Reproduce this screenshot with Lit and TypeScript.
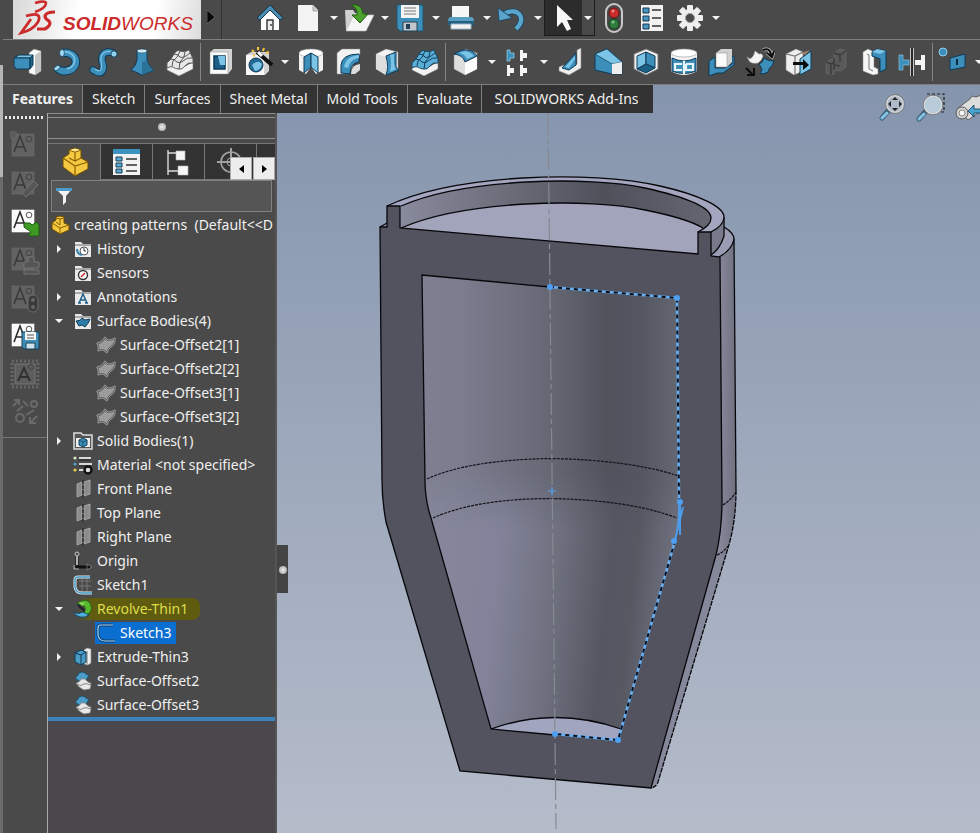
import { LitElement, html, svg, css, TemplateResult } from "lit";
import { customElement, property } from "lit/decorators.js";

/* Toolbar glyphs are drawn on a 30 x 30 grid, tree glyphs on 20 x 20. */
const B = "#3d8fbb";
const L = "#7cc4e6";
const D = "#0f3a57";
const W = "#f2f2f2";

const wavy = (fill: string, line: string) => svg`
  <path d="M2 15L14 22L28 15V22L14 29L2 23Z" fill=${W} stroke="#777" stroke-width=".6"/>
  <path d="M2 16Q6 13 9 7Q12 2 15 4Q19 6 24 3L28 12V16Q23 15 20 19Q17 23 14 22Q10 22 8 20Q5 19 2 21Z" fill=${fill} stroke=${line} stroke-width=".9"/>
  <path d="M5 12Q10 12 12 15Q15 17 18 14Q22 10 27 11M9 7Q13 7 15 10Q18 12 25 6M15 4Q13 11 8 14L7 19M20 5Q20 11 15 15L14 22" fill="none" stroke=${line} stroke-width="1"/>`;

const big: Record<string, TemplateResult> = {
  home: svg`<path d="M6 13V27H24V13L15 5Z" fill="#fff"/><path d="M2 15L15 2L28 15L25 17L15 7L5 17Z" fill="#4a8db4" stroke="#16374d"/><path d="M12 27V17H18V27" fill="#eee" stroke="#333" stroke-width="1.4"/><circle cx="16" cy="22" r=".9" fill="#333"/>`,
  page: svg`<path d="M5 2H20L25 7V28H5Z" fill="#f4f4f4"/><path d="M20 2V8H25" fill="#ccc" stroke="#999" stroke-width=".8"/>`,
  open: svg`<path d="M1 7H9L11 10H20V27H2Z" fill="#cfcfcf"/><path d="M2 28L10 12H30L22 28Z" fill="#f5f5f5" stroke="#bbb" stroke-width=".6"/><path d="M7 2Q18 0 19 11H24L16 20L8 12H13Q14 5 7 2Z" fill="#4ba22c" stroke="#1f5c11"/>`,
  save: svg`<path d="M2 2H28V28H5L2 25Z" fill=${B} stroke="#20546f"/><path d="M6 2H24V15H6Z" fill="#f4f4f4"/><path d="M9 5H21M9 8H21M9 11H21" stroke="#777"/><path d="M8 19H22V28H8Z" fill="#bfc7cc" stroke="#28414f"/><path d="M11 21H15V26H11Z" fill="#1f4258"/>`,
  print: svg`<path d="M6 3H23V16H6Z" fill="#f7f7f7"/><path d="M4 14H26Q28 15 28 18V20H2V18Q2 15 4 14Z" fill="#5aa0c4"/><path d="M2 18H28V22H2Z" fill="#255f80"/><path d="M5 21H25V26H5Z" fill="#f3f3f3" stroke="#97b9ca"/>`,
  undo: svg`<path d="M7 11C20 3 31 15 19 26" fill="none" stroke="#15445f" stroke-width="6"/><path d="M7 11C20 3 31 15 19 26" fill="none" stroke="#5ba4cb" stroke-width="4.4"/><path d="M1 5L2 18L15 15Z" fill="#5ba4cb" stroke="#15445f" stroke-width=".8"/>`,
  cursor: svg`<path d="M8 2V24L13 19L18 28L22 26L18 17H24Z" fill="#f8f8f8"/>`,
  light: svg`<rect x="7" y="1" width="16" height="28" rx="8" fill="#4a4a4a" stroke="#c9c9c9" stroke-width="2"/><circle cx="15" cy="10" r="5" fill="#c92c2a" stroke="#6a1413"/><circle cx="15" cy="21" r="5" fill="#2f7c3d" stroke="#123f1a"/><circle cx="14" cy="8" r="1.5" fill="#ee8a86"/><circle cx="14" cy="19" r="1.5" fill="#86c28e"/>`,
  list: svg`<path d="M4 2H26V28H4Z" fill="#f1f1f1"/><path d="M6 5h6v5H6zM6 13h6v5H6zM6 21h6v5H6z" fill="#4796c0" stroke="#14374f"/><path d="M15 7H24M15 15H24M15 23H24" stroke="#333" stroke-width="1.4"/>`,
  gear: svg`<g fill="#efefef"><g><rect x="12" y="2" width="6" height="26" rx="1"/><rect x="2" y="12" width="26" height="6" rx="1"/></g><g transform="rotate(45 15 15)"><rect x="12" y="2" width="6" height="26" rx="1"/><rect x="2" y="12" width="26" height="6" rx="1"/></g><circle cx="15" cy="15" r="9"/></g><circle cx="15" cy="15" r="4.500" fill="#4a4a4a" stroke="#999"/>`,
  extrude: svg`<path d="M16 6L21 2L28 4V24L22 28L16 26Z" fill="#fafafa" stroke="#888" stroke-width=".6"/><path d="M22 8V28L28 24V4Z" fill="#c6c6c6"/><path d="M1 11L6 8H20L17 11Z" fill=${L} stroke=${D}/><path d="M1 11H17V22H3L1 19Z" fill=${B} stroke=${D}/><path d="M17 11L20 8V18L17 22Z" fill="#1f6389" stroke=${D}/>`,
  revolve: svg`<path d="M12 6C27 4 30 22 15 24Q10 25 6 21" fill="none" stroke=${D} stroke-width="8.5"/><path d="M12 6C27 4 30 22 15 24Q10 25 6 21" fill="none" stroke=${B} stroke-width="6.5"/><path d="M13 5C25 4 28 19 16 22" fill="none" stroke=${L} stroke-width="1.8"/><ellipse cx="11" cy="6" rx="2.4" ry="3.6" fill="#a4dcf3" stroke=${D} stroke-width=".7"/><ellipse cx="6" cy="21" rx="3.4" ry="2" transform="rotate(-40 6 21)" fill="#a4dcf3" stroke=${D} stroke-width=".7"/>`,
  sweep: svg`<path d="M4 23C14 30 16 22 13 14C12 5 18 4 24 6" fill="none" stroke=${D} stroke-width="7.5" stroke-linecap="round"/><path d="M4 23C14 30 16 22 13 14C12 5 18 4 24 6" fill="none" stroke=${B} stroke-width="5.5" stroke-linecap="round"/><path d="M6 22C13 27 13 21 12 14C11 6 17 3 23 5" fill="none" stroke=${L} stroke-width="1.2"/><circle cx="25" cy="7" r="3.2" fill="#8fd0ec" stroke=${D}/>`,
  loft: svg`<path d="M10 4V13Q9 19 4 23L15 28L27 23Q21 19 20 13V4Z" fill=${B} stroke=${D}/><path d="M15 15V28L27 23Q21 19 20 13Z" fill="#2b7299"/><ellipse cx="15" cy="4" rx="5" ry="2" fill="#d7eef8" stroke=${D} stroke-width=".6"/>`,
  boundary: wavy("#e6e6e6", "#555"),
  cut: svg`<path d="M4 5L8 2H26V22L22 27H4Z" fill="#d3d3d3"/><path d="M4 5H22V27H4Z" fill="#fafafa" stroke="#888" stroke-width=".5"/><path d="M8 9H19V22H8Z" fill="#1d5f86" stroke=${D} stroke-width="1.5"/><path d="M12 9H19V18L14 18Z" fill=${L}/>`,
  wizard: svg`<path d="M2 8L7 5H25V24L21 28H2Z" fill="#d3d3d3"/><path d="M2 8H20V28H2Z" fill="#f8f8f8"/><circle cx="12" cy="18" r="7" fill="#226a94" stroke=${D}/><path d="M8 18Q14 12 18 17Q17 23 11 24Z" fill=${L}/><path d="M13 5L28 18" stroke="#111" stroke-width="4"/><path d="M14 5L18 9" stroke="#fff" stroke-width="3"/><path d="M8 3l2 2M14 0v3M20 1l-1 3M9 9l2-1M22 6l3-1" stroke="#f5c242" stroke-width="2"/>`,
  revcut: svg`<path d="M3 6Q15 0 27 6V23L20 27L15 20L10 27L3 23Z" fill=${W}/><ellipse cx="15" cy="6" rx="12" ry="4" fill="#fff" stroke="#999" stroke-width=".6"/><path d="M15 6L8 10V26L15 20Z" fill=${B} stroke=${D}/><path d="M15 6L22 10V26L15 20Z" fill=${L} stroke=${D}/>`,
  sweepcut: svg`<path d="M3 6L8 2H26V7L14 27H3Z" fill=${W} stroke="#888" stroke-width=".5"/><path d="M7 26V18Q8 7 25 7V15Q16 16 16 27Z" fill=${B} stroke=${D}/><path d="M10 20Q12 9 25 8V11Q16 12 14 21Z" fill=${L}/><path d="M17 27Q17 18 26 17V23L21 27Z" fill="#ddd"/>`,
  loftcut: svg`<path d="M4 7L14 2L26 5V23L14 28L4 22Z" fill=${W} stroke="#888" stroke-width=".5"/><path d="M4 7L14 10V28L4 22Z" fill="#ddd"/><path d="M14 9L24 5V20Q26 23 27 23L14 28Q17 20 14 9Z" fill=${B} stroke=${D}/><path d="M18 8L22 7Q21 18 24 22L18 25Q20 16 18 8Z" fill=${L}/>`,
  boundcut: wavy("#5aaed6", "#0e405f"),
  fillet: svg`<path d="M3 8L15 2L26 6V22L14 28L3 22Z" fill="#dedede" stroke="#888" stroke-width=".5"/><path d="M14 14L26 9V22L14 28Z" fill="#fbfbfb"/><path d="M3 7L11 3Q22 2 26 9L14 15Q12 8 3 7Z" fill=${B} stroke=${D}/><path d="M8 6L14 4Q20 5 23 9L16 12Q14 7 8 6Z" fill=${L}/>`,
  pattern: svg`<path d="M4 3H7V6H11V11H7V14H4Z" fill=${B} stroke="#9bd5ef" stroke-width=".7"/><path d="M17 3H20V6H24V11H20V14H17Z" fill="#f5f5f5"/><path d="M4 18H7V21H11V26H7V29H4Z" fill="#f5f5f5"/><path d="M17 18H20V21H24V26H20V29H17Z" fill="#f5f5f5"/>`,
  rib: svg`<path d="M22 3L26 1V21L14 28L4 24V20L9 18L15 21L22 17Z" fill="#eee" stroke="#888" stroke-width=".6"/><path d="M7 21L21 6V18L14 23Z" fill=${B} stroke=${D}/><path d="M10 20L20 9V12L14 21Z" fill=${L}/>`,
  draft: svg`<path d="M2 7L14 2L29 15V27L19 27L2 23Z" fill=${B} stroke=${D}/><path d="M2 7L14 2L29 15L19 17Z" fill=${L} stroke=${D} stroke-width=".7"/><path d="M19 17L29 15V27H19Z" fill="#eeeeee"/>`,
  shell: svg`<path d="M3 7L15 2L27 7V22L15 28L3 22Z" fill=${W} stroke="#777"/><path d="M6 9L15 5V17L6 22Z" fill=${L} stroke=${D}/><path d="M15 5L24 9V21L15 17Z" fill=${B} stroke=${D}/><path d="M6 22L15 17L24 21L15 26Z" fill="#1c6086" stroke=${D}/>`,
  wrap: svg`<path d="M2 6V24Q15 32 28 24V6Z" fill=${W}/><ellipse cx="15" cy="6" rx="13" ry="4" fill="#fff" stroke="#999" stroke-width=".6"/><path d="M3 11Q15 17 27 11V24Q15 29 3 24Z" fill=${B} stroke=${D}/><path d="M13 17H6V23H13M17 17H24V23H17V17M15 14V27" fill="none" stroke="#e9f5fa" stroke-width="2.2"/>`,
  intersect: svg`<path d="M2 14L8 10V21H18L25 17V10L27 9V18L16 26H10L2 29Z" fill=${B} stroke=${D}/><path d="M9 6L14 2H25V15L20 20H9Z" fill="#d0d0d0"/><path d="M9 6H20V20H9Z" fill="#fafafa" stroke="#888" stroke-width=".5"/>`,
  flex: svg`<path d="M2 10L5 12Q9 10 10 4L14 7Q17 6 18 9Q17 13 13 16Q8 17 5 15Z" fill="#f5f5f5" stroke="#aaa" stroke-width=".5"/><path d="M14 17Q18 16 19 11Q22 14 29 14L27 19Q24 20 23 25Q20 27 15 27L17 22Z" fill=${B} stroke=${D}/><path d="M18 3Q25 0 26 8M22 6L27 10L29 4" fill="none" stroke="#c4c4c4" stroke-width="3.4"/><path d="M18 3Q25 0 26 8M22 6L27 10L29 4M1 21L8 28M9 21V28H2" fill="none" stroke="#0c0c0c" stroke-width="2"/>`,
  move: svg`<path d="M3 7L13 2L20 5V24L11 28L3 23Z" fill="#eee" stroke="#888" stroke-width=".6"/><path d="M3 7L12 9L20 5M12 9V28" fill="none" stroke="#777" stroke-width="1.2"/><path d="M17 12L28 4V22L17 28Z" fill=${L} stroke=${D}/><path d="M18 6L27 3L22 8Z" fill="#a3806e"/><path d="M10 15H20V12L26 18L20 23V18H10Z" fill="#0d0d0d"/>`,
  muted: svg`<path d="M5 15L13 11V6L19 2L25 4V20L19 24L13 23V27L10 28L5 26Z" fill="#595959" stroke="#6b6b6b" stroke-width=".8"/><path d="M13 6L19 8L25 4M19 8V15M13 11V23M5 15L10 17L13 16M10 17V28M13 18L19 19" fill="none" stroke="#3b3b3b" stroke-width="1.4"/>`,
  plates: svg`<path d="M4 5L9 2L15 5V20L19 22V27L14 28L4 24Z" fill="#f6f6f6" stroke="#888" stroke-width=".5"/><path d="M8 7L10 8V22L14 24" fill="none" stroke="#777"/><path d="M13 5L18 2L27 4V22L21 25V12L13 9Z" fill=${B} stroke=${D}/><path d="M13 5L18 2L27 4L21 7Z" fill=${L}/>`,
  mirror: svg`<path d="M2 8H6V13H12V18H6V23H2Z" fill=${B} stroke="#8fcfec" stroke-width=".6"/><path d="M28 8H24V13H18V18H24V23H28Z" fill="#f4f4f4"/><path d="M15 1V29" stroke="#e8e8e8" stroke-width="3.6"/><path d="M15 1V29" stroke="#151515" stroke-width="1.8"/>`,
  refgeo: svg`<circle cx="5" cy="5" r="4" fill=${B} stroke="#8fcfec"/><path d="M12 11L27 7V20L12 23Z" fill=${B} stroke=${D}/><path d="M19 12V18" stroke="#0a2a40" stroke-width="2"/>`,
  fit: svg`<path d="M11 17L4 25" stroke="#3a5f78" stroke-width="5" stroke-linecap="round"/><path d="M9 20L4 25" stroke="#86c5e4" stroke-width="3" stroke-linecap="round"/><circle cx="17" cy="11" r="8.500" fill="#aebac9" stroke="#dcdcdc" stroke-width="1.6"/><circle cx="17" cy="11" r="9.4" fill="none" stroke="#666" stroke-width=".7"/><path d="M17 4l3 3h-6zM17 18l3-3h-6zM10 11l3-3v6zM24 11l-3-3v6z" fill="#222"/>`,
  zoom: svg`<path d="M11 1H28V19H22" fill="none" stroke="#222" stroke-width="1.2" stroke-dasharray="3 2"/><path d="M10 18L3 26" stroke="#3a5f78" stroke-width="5" stroke-linecap="round"/><path d="M8 21L3 26" stroke="#86c5e4" stroke-width="3" stroke-linecap="round"/><circle cx="17" cy="12" r="9" fill="#b7cbd8" stroke="#dcdcdc" stroke-width="1.6"/><circle cx="17" cy="12" r="9.8" fill="none" stroke="#666" stroke-width=".7"/>`,
  prev: svg`<path d="M4 15L16 6L18 3L22 4L30 1V16L14 27Z" fill="#dcdcdc" stroke="#555" stroke-width=".9"/><circle cx="8" cy="20" r="6" fill="#d0d0d0" stroke="#555"/><circle cx="8" cy="20" r="3" fill="#f5f5f5" stroke="#888"/><path d="M14 18L20 12V16H30V20H20V24Z" fill="#4ba3cf" stroke=${D} stroke-width=".8"/>`,
  part: svg`<path d="M2 11L8 7V3L14 1L20 3V11L27 15V22L14 29L2 20Z" fill="#f5c842" stroke="#6e4d00"/><path d="M8 3L14 5L20 3M14 5V14L8 11M2 11L14 19L27 15M14 19V29M14 14L20 11" fill="none" stroke="#8a6200" stroke-width="1.2"/><path d="M9 3L14 1.5L19 3L14 4.500Z" fill="#ffe99a"/>`,
  props: svg`<path d="M1 3H28V28H1Z" fill="#f3f3f3"/><path d="M1 2H28V7H1Z" fill="#3b93bf"/><path d="M4 10h6v4H4zM4 16h6v4H4zM4 22h6v4H4z" fill="#5aa9d0" stroke="#173a52"/><path d="M14 12H25M14 18H25M14 24H25" stroke="#333" stroke-width="1.4"/>`,
  config: svg`<path d="M4 3V28M4 6H12M4 24H14" fill="none" stroke="#d9d9d9" stroke-width="1.4"/><path d="M12 4H21V13H12ZM14 19H24V28H14Z" fill="#f6f6f6" stroke="#bbb" stroke-width=".6"/>`,
  target: svg`<circle cx="15" cy="15" r="10" fill="none" stroke="#a2a2a2" stroke-width="1.6"/><circle cx="15" cy="15" r="4" fill="none" stroke="#a2a2a2"/><path d="M15 1V29M1 15H29" stroke="#a2a2a2" stroke-width="2"/>`,
};

/* Annotation-style buttons: a lettered plate with a small badge. */
const plate = (on: boolean, badge: TemplateResult) => svg`
  <rect x="2" y="3" width="22" height="22" fill=${on ? "#fafafa" : "#626262"} stroke=${on ? "#fff" : "#6e6e6e"} stroke-width=".6"/>
  <path d="M4 21L10 5L16 21M6 16H14" fill="none" stroke=${on ? "#2c2c2c" : "#3a3a3a"} stroke-width="1.6"/>
  <circle cx="19" cy="8" r="2.8" fill="none" stroke=${on ? "#555" : "#424242"}/>${badge}`;

const side: Record<string, TemplateResult> = {
  "New annotation style": plate(false, svg`<circle cx="3" cy="4" r="4" fill="#5c5c5c" stroke="#707070" stroke-dasharray="2 1"/>`),
  "Edit annotation style": plate(false, svg`<path d="M12 24L24 12L28 16L16 28Z" fill="#565656" stroke="#717171"/>`),
  "Apply annotation style": plate(true, svg`<path d="M14 16H20L22 18L27 15L29 18V29H18L21 25L14 20Z" fill="#3f9a23" stroke="#1e5a10"/>`),
  "Add annotation style": plate(false, svg`<path d="M18 12H24V17H29V23H14V17H18ZM14 25H29V29H14Z" fill="#555" stroke="#747474"/>`),
  "Lock annotation style": plate(false, svg`<rect x="18" y="12" width="10" height="17" rx="5" fill="#3a3a3a" stroke="#6d6d6d"/><circle cx="23" cy="17" r="2" fill="#666"/><circle cx="23" cy="24" r="2" fill="#666"/>`),
  "Save annotation style": plate(true, svg`<path d="M12 11H29V28H14L12 26Z" fill="#3f8cb5" stroke="#164057"/><path d="M15 11H26V19H15Z" fill="#f5f5f5"/><path d="M17 14H24M17 17H24" stroke="#555"/><path d="M16 22H25V28H16Z" fill="#cfe2ec" stroke="#164057"/>`),
  "Stamp annotation": svg`<path d="M2 2H28V28H2Z" fill="none" stroke="#666" stroke-width="3" stroke-dasharray="2 2"/><path d="M5 5H25V25H5Z" fill="#5e5e5e" stroke="#747474"/><path d="M8 22L14 9L20 22M10 18H18" fill="none" stroke="#303030" stroke-width="1.8"/><circle cx="21" cy="8" r="2.5" fill="none" stroke="#404040"/>`,
  "Link annotations": svg`<g fill="none" stroke="#6a6a6a" stroke-width="2"><circle cx="10" cy="21" r="4"/><circle cx="24" cy="7" r="3"/><path d="M3 9L9 3M9 8V3H4M27 19L20 26M20 20V26H26M13 4L18 9M24 13L16 18M7 14L13 9"/></g>`,
};

const folder = (inner: TemplateResult) => svg`<path d="M2 3H8L10 5H18V18H2Z" fill="#e9e9e9"/><path d="M2 6H18" stroke="#4a4a4a" stroke-width=".8"/>${inner}`;

const small: Record<string, TemplateResult> = {
  part: svg`<path d="M1 8L5 5V2L9 1L13 2V8L18 10V15L9 19L1 14Z" fill="#f5c842" stroke="#6e4d00"/><path d="M5 3L9 4L13 3M9 4V10L5 7M1 8L9 13L18 10M9 13V19" fill="none" stroke="#8a6200"/>`,
  history: folder(svg`<circle cx="11" cy="12" r="4" fill="#fff" stroke="#555"/><path d="M11 9V12H13" fill="none" stroke="#333"/><path d="M4 10Q4 15 9 16" fill="none" stroke="#2e82ad" stroke-width="2"/>`),
  sensors: folder(svg`<circle cx="10" cy="12" r="4.500" fill="#fff" stroke="#333" stroke-width="1.4"/><path d="M8 14L12 10" stroke="#c22" stroke-width="1.4"/>`),
  annotations: folder(svg`<path d="M6 16L10 7L14 16M7 13H13M5 16H8M12 16H15" fill="none" stroke="#1f5f8a" stroke-width="1.5"/>`),
  surfaces: folder(svg`<path d="M3 10Q8 10 9 7L12 9L17 8Q16 12 12 16L9 14L6 15Z" fill="#2d7ba6" stroke="#123f5a"/>`),
  solids: svg`<path d="M1 2H8L10 4H19V18H1Z" fill="#555" stroke="#ddd" stroke-width="1.5"/><path d="M3 7H17V16H3Z" fill="#eee"/><path d="M6 9L10 7L14 9V14L10 16L6 14Z" fill="#3a8fbb" stroke="#123f5a"/><path d="M6 9L10 11L14 9M10 11V16" fill="none" stroke="#123f5a" stroke-width=".8"/>`,
  material: svg`<path d="M6 3H18M6 9H19M6 15H12" stroke="#d8d8d8" stroke-width="2"/><path d="M6 5H18M6 11H18" stroke="#222"/><circle cx="2" cy="3" r="1.6" fill="#cfe8c4"/><circle cx="2" cy="9" r="1.6" fill="#4ba3cf"/><circle cx="2" cy="15" r="1.6" fill="#e8d245"/><circle cx="15" cy="15" r="3.500" fill="#ddd" stroke="#111" stroke-width="2.4"/>`,
  plane: svg`<path d="M4 5L9 3V16L4 18ZM11 3L17 1V15L11 17Z" fill="#8b8b8b" stroke="#b0b0b0" stroke-width=".8"/><path d="M10 1V19" stroke="#2c2c2c" stroke-width="1.4" stroke-dasharray="4 1"/>`,
  origin: svg`<path d="M4 5V16H15" fill="none" stroke="#111" stroke-width="3"/><path d="M4 14V5" stroke="#b0b0b0" stroke-width="2"/><circle cx="4" cy="3" r="2" fill="#4a4a4a" stroke="#c4c4c4"/><path d="M14 13L19 16L14 19Z" fill="#111" stroke="#aaa" stroke-width=".6"/><path d="M1 14V18H6" fill="none" stroke="#ccc" stroke-width=".8"/>`,
  sketch: svg`<path d="M6 6H18M6 11H18M9 2V17M14 2V17" stroke="#777"/><path d="M17 2H5Q2 2 2 5V12Q3 18 9 18H19" fill="none" stroke="#e6e6e6" stroke-width="3"/><path d="M17 2H5Q2 2 2 5V12Q3 18 9 18H19" fill="none" stroke="#3f9bc9" stroke-width="1.4"/>`,
  sketchOn: svg`<path d="M17 2H5Q2 2 2 5V12Q3 18 9 18H19" fill="none" stroke="#15406a" stroke-width="3"/><path d="M17 2H5Q2 2 2 5V12Q3 18 9 18H19" fill="none" stroke="#9fd4f7" stroke-width="1.2"/>`,
  revolve: svg`<path d="M4 5Q12 -2 17 4Q21 13 13 16L10 12Q14 10 11 7Z" fill="#58b82d" stroke="#1f5c11" stroke-width=".8"/><path d="M5 6L12 12" stroke="#223" stroke-width="2.4"/><path d="M1 13Q6 16 9 13Q13 14 16 16Q12 19 7 18Q2 17 1 13Z" fill="#4fb0dc" stroke="#0f3a57" stroke-width=".8"/><path d="M6 3L12 4L9 7Z" fill="#8fd65c"/>`,
  extrude: svg`<path d="M11 3L14 1L18 2V16L15 18L11 17Z" fill="#eee" stroke="#888" stroke-width=".6"/><path d="M14 4V17" stroke="#777"/><path d="M2 6L8 3L13 5V15L8 18L2 15Z" fill="#4a9cc6" stroke="#0f3a57"/><path d="M2 6L8 8L13 5M8 8V18" fill="none" stroke="#0f3a57"/>`,
  offset: svg`<path d="M2 7Q5 5 6 2Q9 0 12 2Q13 4 16 4Q14 9 11 11Q6 11 2 7Z" fill="#4a9cc6" stroke="#123f5a" stroke-width=".7"/><path d="M3 12Q7 11 8 8Q12 7 14 10Q16 12 18 12Q18 16 17 18L11 19Q6 17 3 12Z" fill="#e8e8e8" stroke="#777" stroke-width=".7"/><path d="M4 13Q8 16 11 13Q14 12 18 14" fill="none" stroke="#888"/>`,
  body: svg`<path d="M1 8Q6 8 9 2L12 5Q16 5 19 3Q20 9 15 12Q12 14 11 18L7 15Q4 15 2 16Q3 12 1 8Z" fill="#9c9c9c" stroke="#555" stroke-width="2"/><path d="M1 8Q6 8 9 2L12 5Q16 5 19 3Q20 9 15 12Q12 14 11 18L7 15Q4 15 2 16Q3 12 1 8Z" fill="none" stroke="#b4b4b4" stroke-width=".7"/>`,
};

const glyph = (name: string) => html`<svg width="30" height="30" viewBox="0 0 30 30" aria-hidden="true">${big[name]}</svg>`;

type Tool = [string, string, boolean?];
type Row = { label: string; icon: string; caret?: "open" | "shut"; kind?: string };

const quick: Tool[] = [
  ["home", "Welcome"], ["page", "New", true], ["open", "Open", true], ["save", "Save", true],
  ["print", "Print", true], ["undo", "Undo", true], ["cursor", "Select", true],
  ["light", "Rebuild"], ["list", "File properties"], ["gear", "Options", true],
];

const groups: Tool[][] = [
  [["extrude", "Extruded boss"], ["revolve", "Revolved boss"], ["sweep", "Swept boss"], ["loft", "Lofted boss"], ["boundary", "Boundary boss"]],
  [["cut", "Extruded cut"], ["wizard", "Hole wizard", true], ["revcut", "Revolved cut"], ["sweepcut", "Swept cut"], ["loftcut", "Lofted cut"], ["boundcut", "Boundary cut"]],
  [["fillet", "Fillet", true], ["pattern", "Linear pattern", true], ["rib", "Rib"], ["draft", "Draft"], ["shell", "Shell"], ["wrap", "Wrap"], ["intersect", "Intersect"], ["flex", "Flex"], ["move", "Move face"], ["muted", "Combine"], ["plates", "Split"], ["mirror", "Mirror"]],
  [["refgeo", "Reference geometry", true]],
];

const tabs = ["Features", "Sketch", "Surfaces", "Sheet Metal", "Mold Tools", "Evaluate", "SOLIDWORKS Add-Ins"];

const rows: Row[] = [
  { label: "creating patterns  (Default<<D", icon: "part", kind: "root" },
  { label: "History", icon: "history", caret: "shut" },
  { label: "Sensors", icon: "sensors" },
  { label: "Annotations", icon: "annotations", caret: "shut" },
  { label: "Surface Bodies(4)", icon: "surfaces", caret: "open" },
  { label: "Surface-Offset2[1]", icon: "body", kind: "child" },
  { label: "Surface-Offset2[2]", icon: "body", kind: "child" },
  { label: "Surface-Offset3[1]", icon: "body", kind: "child" },
  { label: "Surface-Offset3[2]", icon: "body", kind: "child" },
  { label: "Solid Bodies(1)", icon: "solids", caret: "shut" },
  { label: "Material <not specified>", icon: "material" },
  { label: "Front Plane", icon: "plane" },
  { label: "Top Plane", icon: "plane" },
  { label: "Right Plane", icon: "plane" },
  { label: "Origin", icon: "origin" },
  { label: "Sketch1", icon: "sketch" },
  { label: "Revolve-Thin1", icon: "revolve", caret: "open", kind: "marked" },
  { label: "Sketch3", icon: "sketchOn", kind: "child selected" },
  { label: "Extrude-Thin3", icon: "extrude", caret: "shut" },
  { label: "Surface-Offset2", icon: "offset" },
  { label: "Surface-Offset3", icon: "offset" },
];

const shared = css`
  * { box-sizing: border-box; }
  button { font: inherit; color: inherit; background: none; border: 0; margin: 0; padding: 0; display: flex; align-items: center; justify-content: center; flex: none; }
  svg { display: block; flex: none; }
`;

@customElement("tool-button")
export class ToolButton extends LitElement {
  @property() icon = "";
  @property() label = "";
  @property({ type: Boolean }) menu = false;
  static styles = [shared, css`
    :host { display: flex; flex: none; height: 100%; }
    .tool { width: 38px; height: 100%; }
    .menu { width: var(--menu, 13px); height: 100%; }
    :host([icon="cursor"]) { border: 1px solid #1c1c1c; border-top: 0; }
    :host([icon="cursor"]) .tool { background: #2c2c2c; width: 37px; }
    :host([icon="cursor"]) .menu { width: 12px; }
  `];
  render() {
    return html`<button class="tool" aria-label=${this.label}>${glyph(this.icon)}</button>
      ${this.menu ? html`<button class="menu" aria-label=${this.label + " options"}>
        <svg width="8" height="4" viewBox="0 0 8 4"><path d="M0 0H8L4 4Z" fill="#f2f2f2"/></svg></button>` : ""}`;
  }
}

@customElement("feature-tree")
export class FeatureTree extends LitElement {
  static styles = [shared, css`
    :host { display: block; padding-top: 1px; }
    ul { list-style: none; margin: 0; padding: 0; border-bottom: 4px solid #3d82bd; }
    li { display: flex; align-items: center; height: 24px; white-space: pre; }
    .caret { width: 22px; height: 24px; }
    .item { display: flex; align-items: center; gap: 4px; height: 22px; padding: 0 4px 0 1px; margin-left: 2px; }
    .space { flex: none; width: 22px; }
    .root .item { padding-right: 0; gap: 3px; }
    .root .space { display: none; }
    .child .item { margin-left: 25px; }
    .selected .item { background: #0b6ed1; color: #fff; }
    .marked .item { background: linear-gradient(90deg, #4a4a4a 5px, #5f5c10 20px); border-radius: 0 8px 8px 0; padding-right: 12px; color: #dfdd48; }
  `];
  render() {
    return html`<ul role="tree" aria-label="Feature tree">${rows.map((r) => html`
      <li role="treeitem" class=${r.kind ?? ""}>
        ${r.caret ? html`<button class="caret" aria-label=${"Toggle " + r.label}>${r.caret === "open"
          ? html`<svg width="8" height="4" viewBox="0 0 8 4"><path d="M0 0H8L4 4Z" fill="#f2f2f2"/></svg>`
          : html`<svg width="4" height="8" viewBox="0 0 4 8"><path d="M0 0V8L4 4Z" fill="#f2f2f2"/></svg>`}</button>`
          : html`<span class="space"></span>`}
        <span class="item"><svg width="20" height="20" viewBox="0 0 20 20" aria-hidden="true">${small[r.icon]}</svg>${r.label}</span>
      </li>`)}</ul>`;
  }
}

@customElement("model-view")
export class ModelView extends LitElement {
  static styles = css`
    :host { display: block; min-height: 0; }
    svg { display: block; width: 100%; height: 100%; }
    .edge { fill: none; stroke: #07070b; stroke-width: 1.3; }
    .dots { fill: none; stroke: #111218; stroke-width: 1.2; stroke-dasharray: 3 1; }
    .pick { fill: none; stroke: #68aef0; stroke-width: 2.6; }
    .pickdash { fill: none; stroke: #0a0f1c; stroke-width: 2; stroke-dasharray: 4 4; }
    .thin { fill: none; stroke: #4e9ce8; stroke-width: 2; }
    .node { fill: #4e9ff2; }
  `;
  render() {
    return html`<svg viewBox="277 113 703 720" role="img" aria-label="Section view of a revolved thin-wall part">
      <defs>
        <linearGradient id="upper" x1="422" x2="680" y1="0" y2="0" gradientUnits="userSpaceOnUse">
          <stop offset="0" stop-color="#7e8092"/><stop offset=".15" stop-color="#7b7d8f"/><stop offset=".45" stop-color="#696b78"/><stop offset=".72" stop-color="#50525c"/><stop offset=".85" stop-color="#545661"/><stop offset="1" stop-color="#656772"/>
        </linearGradient>
        <linearGradient id="lower" x1="430" y1="600" x2="680" y2="625" gradientUnits="userSpaceOnUse">
          <stop offset="0" stop-color="#86879b"/><stop offset=".25" stop-color="#82839a"/><stop offset=".48" stop-color="#6f717f"/><stop offset=".7" stop-color="#545761"/><stop offset=".8" stop-color="#565862"/><stop offset="1" stop-color="#777989"/>
        </linearGradient>
        <linearGradient id="fade" x1="0" x2="0" y1="470" y2="530" gradientUnits="userSpaceOnUse">
          <stop offset="0" stop-color="#000"/><stop offset="1" stop-color="#fff"/>
        </linearGradient>
        <mask id="low" maskUnits="userSpaceOnUse" x="400" y="260" width="300" height="500"><rect x="400" y="260" width="300" height="500" fill="url(#fade)"/></mask>
        <linearGradient id="ring" x1="390" x2="720" y1="0" y2="0" gradientUnits="userSpaceOnUse">
          <stop offset="0" stop-color="#8b8da1"/><stop offset=".3" stop-color="#70727f"/><stop offset=".65" stop-color="#4e505a"/><stop offset="1" stop-color="#666874"/>
        </linearGradient>
        <linearGradient id="flank" x1="720" x2="736" y1="0" y2="0" gradientUnits="userSpaceOnUse">
          <stop offset="0" stop-color="#85879a"/><stop offset="1" stop-color="#6f717f"/>
        </linearGradient>
      </defs>
      <path d="M720 257L734 239L736 490Q736 522 728 548L658 782L651 788Z" fill="url(#flank)"/>
      <path class="edge" d="M734 239L736 490"/>
      <path d="M724 227Q734 233 734 239Q732 250 719 257L711 255Q720 249 724 238Z" fill="#9a9cb4"/>
      <path class="edge" d="M724 227Q734 233 734 239Q732 250 719 257"/>
      <path d="M711 232Q724 226 724 217V236Q720 249 711 255Z" fill="#787a8b"/>
      <path class="edge" d="M724 217V236Q720 249 711 255"/>
      <path d="M387 206C455 174 590 170 660 186C700 195 724 207 724 217C724 224 719 228 711 232H698L400 206Z" fill="#a3a6be"/>
      <path d="M401 206C465 178 590 176 645 188C690 198 711 208 711 218C711 224 706 228 698 232V254L401 228Z" fill="url(#ring)"/>
      <path d="M401 228C465 200 590 198 645 210C675 216 693 222 703 228L698 232V254Z" fill="#a1a4bb"/>
      <path class="edge" d="M387 206C455 174 590 170 660 186C700 195 724 207 724 217C724 224 719 228 711 232M401 206C465 178 590 176 645 188C690 198 711 208 711 218C711 224 706 228 698 232M401 228C465 200 590 198 645 210C675 216 693 222 703 228M380 227L387 223"/>
      <path d="M380 227H387V206H400V228L698 254V232H711V256L720 257L722 500Q722 530 716 555L651 788L460 771L386 522Q382 500 382 480Z" fill="#52535e"/>
      <path class="edge" d="M380 227H387V206H400V228L698 254V232H711V256L720 257L722 500Q722 530 716 555L651 788L460 771L386 522Q382 500 382 480Z"/>
      <path d="M422 275L677 298L679 501Q680 522 675 541L618 740L491 729L431 518Q425 500 425 480Z" fill="url(#upper)"/>
      <path d="M422 275L677 298L679 501Q680 522 675 541L618 740L491 729L431 518Q425 500 425 480Z" fill="url(#lower)" mask="url(#low)"/>
      <path d="M491 729Q555 706 621 729L618 740Z" fill="#a2a5c0"/>
      <path class="edge" d="M550 287L422 275L425 480Q425 500 431 518L491 729L555 735M491 729Q555 706 621 729"/>
      <path class="dots" d="M427 479Q468 460 550 458.500Q630 460 679 476M433 518Q475 499 550 498.500Q630 500 677 518M723 505Q731 500 736 492M717 555Q724 552 728 546"/>
      <path class="edge" d="M736 490Q736 522 728 548L658 782Q656 787 651 788" stroke-dasharray="5 1"/>
      <path d="M548 113L556 829" stroke="#858a90" stroke-width="1.2" stroke-dasharray="22 4 5 4" fill="none"/>
      <path class="pick" d="M550 287L677 298L679 501M675 541L618 740L555 734"/>
      <path class="pickdash" d="M550 287L677 298L679 501M675 541L618 740L555 734"/>
      <path class="thin" d="M679 501Q680 522 675 541M683 507L677 532M680 505V535"/>
      <path d="M548 491H556M552 487V495" stroke="#4e9ff2" stroke-width="1.2"/>
      <g class="node"><circle cx="550" cy="287" r="3"/><circle cx="677" cy="298" r="3"/><circle cx="680" cy="502" r="3"/><circle cx="674" cy="541" r="3"/><circle cx="618" cy="740" r="3"/><circle cx="555" cy="734" r="3"/></g>
    </svg>`;
  }
}

@customElement("app-root")
export class AppRoot extends LitElement {
  static styles = [shared, css`
    :host { display: flex; flex-direction: column; min-height: 100vh; background: #4a4a4a; color: #f0f0f0; font: 14px/24px "Noto Sans", "Open Sans", sans-serif; overflow: hidden; }
    header { padding-left: 3px; background: linear-gradient(#b5b5b5, #b5b5b5) 0 100% / 3px 20px no-repeat; }
    .titlebar { display: flex; height: 40px; padding-left: 10px; border-bottom: 1px solid #7e7e7e; overflow: hidden; }
    .brand { display: flex; align-items: center; width: 188px; flex: none; background: linear-gradient(100deg, #d8d8d8, #fff 35% 75%, #dcdcdc); color: #cc2b2b; font: italic 19px/24px "Liberation Sans", sans-serif; padding: 8px 0 0 5px; }
    .brand svg { margin-top: -12px; }
    .expand { width: 21px; border-right: 1px solid #333; margin-right: 29px; padding-bottom: 6px; }
    .quick { display: flex; height: 36px; flex: none; }
    .ribbon { display: flex; height: 45px; align-items: stretch; padding-left: 6px; border-bottom: 1px solid #7e7e7e; overflow: hidden; --menu: 14px; }
    .group { display: flex; flex: none; }
    .group + .group { padding-left: 3px; background: linear-gradient(#858585, #858585) 1px 50% / 1px 38px no-repeat; }
    main { display: flex; flex-direction: column; flex: 1; background: linear-gradient(#8595ad, #b5bcca); }
    nav { display: flex; align-self: flex-start; border-left: 3px solid #b5b5b5; background: #333; }
    nav button { height: 28px; padding: 0 9px; border-left: 1px solid #7e7e7e; }
    nav button:first-child { background: #4a4a4a; font-weight: 700; border-left: 0; }
    nav button:last-child { padding: 0 14px 0 12px; }
    .work { display: flex; flex: 1; }
    .edgebar { width: 3px; flex: none; background: linear-gradient(#b5b5b5 0 64px, #6b6b6b 64px); }
    .styles { width: 44px; flex: none; background: #4a4a4a; padding-top: 3px; }
    .grip { height: 3px; margin: 0 2px; background: repeating-linear-gradient(90deg, #e8e8e8 0 2px, #4a4a4a 2px 4px); }
    .stack { display: flex; flex-direction: column; gap: 8px; padding: 12px 0 10px 7px; border-bottom: 1px solid #777; }
    .stack button { width: 30px; height: 30px; }
    aside { width: 230px; flex: none; background: #4a484c; border-left: 1px solid #a9a9a9; border-right: 2px solid #555; }
    .upper { background: #4a4a4a; }
    .handle { display: flex; align-items: center; justify-content: center; height: 26px; border: solid #8f8f8f; border-width: 1px 0; box-shadow: inset 0 3px #4a4a4a, inset 0 4px #8f8f8f; }
    .dot { width: 8px; height: 8px; border-radius: 4px; background: radial-gradient(#eee, #999); margin-top: 2px; }
    .panes { display: flex; position: relative; height: 41px; padding-top: 4px; overflow: hidden; }
    .panes .pane { width: 52px; background: #333; border: solid #777; border-width: 1px 0 1px 1px; }
    .panes .pane:first-child { background: #4a4a4a; border-width: 1px 0 0; padding-left: 4px; }
    .scroll { position: absolute; right: 0; bottom: 0; display: flex; gap: 1px; }
    .scroll button { width: 22px; height: 23px; background: #ededed; border: 1px solid #aaa; }
    .filter { display: flex; align-items: center; height: 32px; margin: 0 3px; padding-left: 4px; background: #555; border: 1px solid #808080; }
    .filter input { flex: 1; min-width: 0; background: none; border: 0; outline: 0; color: inherit; font: inherit; }
    .view { position: relative; flex: 1; display: flex; min-width: 0; }
    .view model-view { flex: 1; }
    .flap { position: absolute; left: 0; top: 60%; width: 11px; height: 48px; background: #444; }
    .hud { position: absolute; right: -4px; top: -20px; display: flex; gap: 8px; }
  `];
  render() {
    return html`
      <header>
        <div class="titlebar">
          <div class="brand" aria-label="SolidWorks">
            <svg width="45" height="38" viewBox="0 0 45 38" aria-hidden="true"><g fill="none" stroke="#cc2b2b" stroke-width="2.6">
              <path d="M17 4Q27 1 28 4Q28 9 17 13"/><path d="M8 17Q25 12 20 23Q15 31 3 34L13 20" stroke-width="2.8"/><path d="M37 13Q28 13 27 17Q27 20 31 22Q34 26 27 30H19" stroke-width="3.200"/></g></svg>
            <b>SOLID</b><span>WORKS</span>
          </div>
          <button class="expand" aria-label="Show menu"><svg width="8" height="14" viewBox="0 0 8 14"><path d="M0 0V14L8 7Z" fill="#080808" stroke="#999" stroke-width=".5"/></svg></button>
          <div class="quick">${quick.map(([i, l, m]) => html`<tool-button icon=${i} label=${l} ?menu=${m}></tool-button>`)}</div>
        </div>
        <div class="ribbon">${groups.map((g) => html`<div class="group">${g.map(([i, l, m]) => html`<tool-button icon=${i} label=${l} ?menu=${m}></tool-button>`)}</div>`)}</div>
      </header>
      <main>
        <nav aria-label="Command tabs">${tabs.map((t) => html`<button>${t}</button>`)}</nav>
        <div class="work">
          <div class="edgebar"></div>
          <div class="styles"><div class="grip"></div><div class="stack">${Object.entries(side).map(([l, g]) => html`<button aria-label=${l}><svg width="30" height="30" viewBox="0 0 30 30">${g}</svg></button>`)}</div></div>
          <aside>
            <div class="upper">
              <div class="handle"><span class="dot"></span></div>
              <div class="panes">
                ${[["part", "Feature tree"], ["props", "Properties"], ["config", "Configurations"], ["target", "Dimensions"], ["", "Appearance"]].map(([i, l]) => html`<button class="pane" aria-label=${l}>${i ? glyph(i) : ""}</button>`)}
                <div class="scroll">
                  <button aria-label="Previous tab"><svg width="5" height="8" viewBox="0 0 5 8"><path d="M5 0V8L0 4Z" fill="#000"/></svg></button>
                  <button aria-label="Next tab"><svg width="5" height="8" viewBox="0 0 5 8"><path d="M0 0V8L5 4Z" fill="#000"/></svg></button>
                </div>
              </div>
              <label class="filter"><svg width="16" height="18" viewBox="0 0 16 18"><path d="M0 2H16L10 9V15L7 18V9Z" fill="#f3f3f3"/><path d="M0 1H16V4H0Z" fill="#4a9cc6"/></svg><input aria-label="Filter tree"></label>
              <feature-tree></feature-tree>
            </div>
          </aside>
          <section class="view">
            <model-view></model-view>
            <button class="flap" aria-label="Collapse panel"><span class="dot"></span></button>
            <div class="hud">${[["fit", "Zoom to fit"], ["zoom", "Zoom to area"], ["prev", "Previous view"]].map(([i, l]) => html`<button aria-label=${l}>${glyph(i)}</button>`)}</div>
          </section>
        </div>
      </main>`;
  }
}
